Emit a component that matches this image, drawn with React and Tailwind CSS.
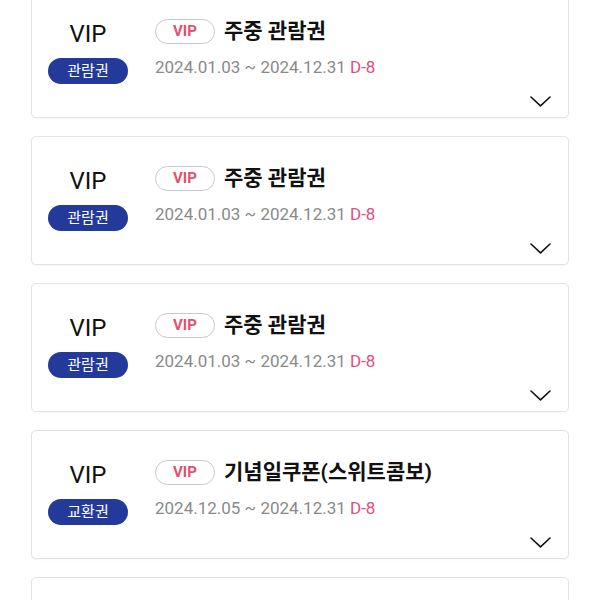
import React from 'react';

const tickets = [
  { badge: '관람권', title: '주중 관람권', period: '2024.01.03 ~ 2024.12.31' },
  { badge: '관람권', title: '주중 관람권', period: '2024.01.03 ~ 2024.12.31' },
  { badge: '관람권', title: '주중 관람권', period: '2024.01.03 ~ 2024.12.31' },
  { badge: '교환권', title: '기념일쿠폰(스위트콤보)', period: '2024.12.05 ~ 2024.12.31' },
  { badge: '관람권', title: '주중 관람권', period: '2024.01.03 ~ 2024.12.31' },
];

const Chevron = () => (
  <svg width="21" height="11" viewBox="0 0 21 11" fill="none">
    <path d="M1 1 L10.5 9.8 L20 1" stroke="#111" strokeWidth="1.6" strokeLinecap="round" strokeLinejoin="round" />
  </svg>
);

const TicketCard = ({ ticket }) => (
  <div className="flex h-[129px] bg-white border border-[#e3e3e3] rounded-[5px] shadow-[0_1px_2px_rgba(0,0,0,0.04)]">
    <div className="w-[112px] flex flex-col items-center pt-[30px]">
      <span className="text-[24px] leading-[28px] text-[#111]">VIP</span>
      <span className="mt-[10px] w-[80px] h-[26px] rounded-full bg-[#233a9b] text-white text-[15px] leading-[26px] text-center">
        {ticket.badge}
      </span>
    </div>
    <div className="flex-1 flex flex-col pl-[11px] pr-[17px] pt-[28px]">
      <div className="flex items-center">
        <span className="w-[60px] h-[25px] rounded-full border border-[#c9c9c9] text-[#e2506f] text-[15px] font-bold leading-[23px] text-center">
          VIP
        </span>
        <span className="ml-[9px] text-[21px] font-bold text-[#111] leading-[25px] pt-[1px]">{ticket.title}</span>
      </div>
      <div className="mt-[12px] text-[17px] leading-[22px] text-[#8a8a8a]">
        {ticket.period} <span className="text-[#dc5080]">D-8</span>
      </div>
      <div className="flex justify-end mt-[18px]">
        <Chevron />
      </div>
    </div>
  </div>
);

export default function App() {
  return (
    <div className="w-[600px] h-[600px] overflow-hidden bg-white" style={{ fontFamily: 'Roboto, "Noto Sans CJK KR", sans-serif' }}>
      <div className="-mt-[11px] px-[31px] flex flex-col gap-[18px]">
        {tickets.map((t, i) => (
          <TicketCard key={i} ticket={t} />
        ))}
      </div>
    </div>
  );
}
